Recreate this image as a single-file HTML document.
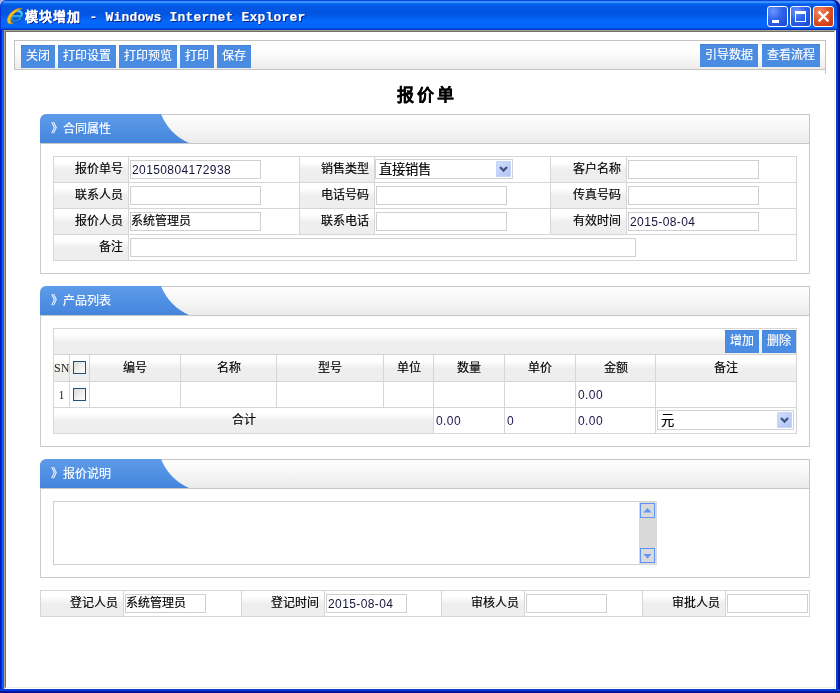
<!DOCTYPE html>
<html lang="zh-CN">
<head>
<meta charset="utf-8">
<title>模块增加</title>
<style>
*{box-sizing:border-box;margin:0;padding:0}
html,body{width:840px;height:693px;overflow:hidden}
body{position:relative;background:#fff;font-family:"Liberation Sans",sans-serif;font-size:12px;color:#000;-webkit-text-stroke:.150px}
.abs{position:absolute}
/* window frame */
#corner{left:0;top:0;width:840px;height:12px;background:#a6b6ed}
#tbar{left:0;top:0;width:840px;height:30px;border-radius:7px 7px 0 0;
 background:linear-gradient(180deg,#0848dc 0,#0848dc .600px,#3b90ff 1.400px,#3a8fff 2.600px,#0b6cf6 3.500px,#0560ec 4.500px,#0357e3 6px,#0355e1 14px,#0460f0 18px,#0468fc 21px,#0467fc 27px,#0550e2 28.500px,#0234c6 29.500px,#0234c6 30px)}
#tbar:before{content:"";position:absolute;left:0;top:0;width:100%;height:100%;border-radius:7px 7px 0 0;
 box-shadow:inset 1px 0 #0831d9,inset -1px 0 #00138c,inset -3px 0 #001ea0}
#bl{left:0;top:30px;width:4px;height:663px;background:linear-gradient(90deg,#0019cc 0,#0019cc 1.200px,#1667ee 2.600px,#0a54e0 4px)}
#br{left:836px;top:30px;width:4px;height:663px;background:linear-gradient(90deg,#0844dc 0,#0831d9 2px,#001ea0 2px,#00138c 4px)}
#bb{left:0;top:689px;width:840px;height:4px;background:linear-gradient(180deg,#0844dc 0,#0831d9 2px,#001ea0 2px,#00138c 4px)}
#edge{left:4px;top:30px;width:832px;height:659px;border-style:solid;border-width:1px;border-color:#aca899 #fff #fff #aca899}
#edge2{left:5px;top:31px;width:830px;height:657px;border-style:solid;border-width:1px;border-color:#716f64 #f1efe2 #f1efe2 #716f64}
#ttl{left:24.500px;top:9px;height:16px;line-height:16px;color:#fff;font-weight:bold;font-size:13px;white-space:pre;text-shadow:1px 1px #0a1f8f}
#ttl .cn{letter-spacing:1px}
#ttl .en{font-family:"Liberation Mono",monospace;letter-spacing:.2px;margin-left:1px}
.cap{top:6px;width:21px;height:21px;border:1px solid #fff;border-radius:3px}
.capb{background:radial-gradient(circle at 28% 22%,#6a96fa 0,#2e63ec 45%,#1a45d0 100%)}
.capr{background:radial-gradient(circle at 30% 25%,#ee8c6c 0,#de4f22 50%,#c2330f 100%)}
/* toolbar */
#tool{left:14px;top:40px;width:812px;height:30px;border:1px solid #c4c4c4;background:linear-gradient(180deg,#fff 0,#fdfdfd 40%,#ececec 100%)}
#toolr{left:825px;top:40px;width:1px;height:34px;background:#c4c4c4}
.btn{height:23px;line-height:23px;background:#4a8ce2;color:#fff;text-align:center;font-size:12px;box-shadow:inset 0 1px #4583d6}
/* sections */
.sec{left:40px;width:770px;border:1px solid #cbcbcb;background:#fff;border-top-left-radius:7px}
.hd{left:40px;width:770px;height:30px;border:1px solid #c6c6c6;border-top-left-radius:7px;background:linear-gradient(180deg,#fefefe 0,#f6f6f6 50%,#ebebeb 100%)}
.tab{left:40px;width:156px;height:30px}
.tabt{color:#fff;font-size:12px;left:51px;height:14px;line-height:14px;white-space:pre}
/* form grid */
.line{background:#d6d6d6}
.lab{background:linear-gradient(180deg,#fff 0,#fff 22%,#eee 52%,#eee 100%);text-align:right;padding-right:5px;height:25px;line-height:25px;white-space:nowrap}
.inp{border:1px solid #cfcfcf;background:#fff;height:19px;line-height:18px;padding-left:1px;font-size:12px;color:#15153a;white-space:nowrap;overflow:hidden}
.inp.cn{color:#000;padding-left:0;line-height:16px}
.num{letter-spacing:.4px;-webkit-text-stroke:0}
.sel{border:1px solid #d2d2d2;background:#fff;height:20px;line-height:20px;padding-left:3px;font-size:13.300px;white-space:nowrap}
.dd{width:15px;height:16px;border-radius:2px;background:linear-gradient(135deg,#d6e1fd 0,#c0d1fa 50%,#aec3f6 100%);box-shadow:inset 0 0 0 1px #c5d3fb}
.gh{background:linear-gradient(180deg,#fff 0,#fff 22%,#eee 52%,#eee 100%)}
.th{height:26px;line-height:26px;text-align:center;white-space:nowrap}
.ser{font-family:"Liberation Serif",serif;font-size:12px;color:#2a1d0e;-webkit-text-stroke:0}
.chk{width:13px;height:13px;border:1px solid #1c5180;background:linear-gradient(135deg,#dcdcd6 0,#f1f1ee 60%,#fff 100%)}
.val{color:#1a1750;font-size:12px;height:14px;line-height:14px;white-space:nowrap}
.sbtn{width:15px;height:15px;border:1px solid #5f93f6;background:#d9d9d9}
</style>
</head>
<body>
<div id="root" class="abs" style="left:0;top:0;width:840px;height:693px;will-change:transform">
<!-- XP window chrome -->
<div class="abs" id="corner"></div>
<div class="abs" id="tbar"></div>
<div class="abs" id="bl"></div>
<div class="abs" id="br"></div>
<div class="abs" id="bb"></div>
<div class="abs" id="edge"></div>
<div class="abs" id="edge2"></div>
<svg class="abs" style="left:7px;top:8px;overflow:visible" width="16" height="16" viewBox="0 0 16 16">
 <defs><linearGradient id="eg" gradientUnits="userSpaceOnUse" x1="0" y1="2" x2="0" y2="14"><stop offset="0" stop-color="#58ccff"/><stop offset=".55" stop-color="#22a4f2"/><stop offset="1" stop-color="#0d74dc"/></linearGradient></defs>
 <g transform="translate(2.200 0) skewX(-14)">
 <path d="M5 8.300H14.300C14.600 4.900 12.300 2.900 9.500 2.900C6.500 2.900 4.300 5.100 4.300 8C4.300 10.900 6.400 13 9.300 13C11.500 13 13.300 11.900 14.100 10.100" fill="none" stroke="#0b3a9e" stroke-width="3.700"/>
 <path d="M5 8.300H14.300C14.600 4.900 12.300 2.900 9.500 2.900C6.500 2.900 4.300 5.100 4.300 8C4.300 10.900 6.400 13 9.300 13C11.500 13 13.300 11.900 14.100 10.100" fill="none" stroke="url(#eg)" stroke-width="2.500"/>
 </g>
 <path d="M15.200 .5C12 -.6 6.500 1.500 3 5.800C0 9.600 -.6 13.600 1.400 15.200C2.600 16.200 4.800 15.900 6.600 14.800C5 15 4.200 14.500 3.800 13.600C3 11.800 4 8.800 6.600 6C9.200 3.200 12.800 1.100 15.200 .5Z" fill="#f8c01f" stroke="#c2820c" stroke-width=".5"/>
</svg>
<div class="abs" id="ttl"><span class="cn">模块增加</span><span class="en"> - Windows Internet Explorer</span></div>
<div class="abs cap capb" style="left:767px"><div class="abs" style="left:4px;top:13px;width:7px;height:3px;background:#fff"></div></div>
<div class="abs cap capb" style="left:790px"><div class="abs" style="left:4px;top:4px;width:11px;height:11px;border:1px solid #fff;border-top-width:3px"></div></div>
<div class="abs cap capr" style="left:813px"><svg class="abs" style="left:0;top:0" width="19" height="19" viewBox="0 0 19 19"><path d="M5.500 5.500l8 8M13.500 5.500l-8 8" stroke="#fff" stroke-width="2.400" stroke-linecap="square"/></svg></div>

<!-- toolbar -->
<div class="abs" id="tool"></div>
<div class="abs" id="toolr"></div>
<div class="abs btn" style="left:21px;top:45px;width:34px">关闭</div>
<div class="abs btn" style="left:58px;top:45px;width:58px">打印设置</div>
<div class="abs btn" style="left:119px;top:45px;width:58px">打印预览</div>
<div class="abs btn" style="left:180px;top:45px;width:34px">打印</div>
<div class="abs btn" style="left:217px;top:45px;width:34px">保存</div>
<div class="abs btn" style="left:700px;top:44px;width:58px">引导数据</div>
<div class="abs btn" style="left:762px;top:44px;width:58px">查看流程</div>

<!-- title -->
<div class="abs" style="left:40px;top:85px;width:770px;height:22px;line-height:22px;text-align:center;font-size:17px;font-weight:bold;letter-spacing:3px;padding-left:3px">报价单</div>

<!-- section 1 -->
<div class="abs sec" style="top:114px;height:160px"></div>
<div class="abs hd" style="top:114px"></div>
<svg class="abs tab" style="top:114px" viewBox="0 0 156 30"><defs><linearGradient id="tg" x1="0" y1="0" x2="0" y2="1"><stop offset="0" stop-color="#5e9ce9"/><stop offset="1" stop-color="#4485dc"/></linearGradient></defs><path d="M0 29V7Q0 0 7 0H121Q129 20 149 29Z" fill="url(#tg)"/></svg>
<div class="abs tabt" style="top:122px">》合同属性</div>

<!-- section 2 -->
<div class="abs sec" style="top:286px;height:161px"></div>
<div class="abs hd" style="top:286px"></div>
<svg class="abs tab" style="top:286px" viewBox="0 0 156 30"><path d="M0 29V7Q0 0 7 0H121Q129 20 149 29Z" fill="url(#tg)"/></svg>
<div class="abs tabt" style="top:294px">》产品列表</div>

<!-- section 3 -->
<div class="abs sec" style="top:459px;height:119px"></div>
<div class="abs hd" style="top:459px"></div>
<svg class="abs tab" style="top:459px" viewBox="0 0 156 30"><path d="M0 29V7Q0 0 7 0H121Q129 20 149 29Z" fill="url(#tg)"/></svg>
<div class="abs tabt" style="top:467px">》报价说明</div>

<!-- form1 -->
<div class="abs line" style="left:53px;top:156px;width:744px;height:1px"></div>
<div class="abs line" style="left:53px;top:182px;width:744px;height:1px"></div>
<div class="abs line" style="left:53px;top:208px;width:744px;height:1px"></div>
<div class="abs line" style="left:53px;top:234px;width:744px;height:1px"></div>
<div class="abs line" style="left:53px;top:260px;width:744px;height:1px"></div>
<div class="abs line" style="left:53px;top:156px;width:1px;height:105px"></div>
<div class="abs line" style="left:128px;top:156px;width:1px;height:105px"></div>
<div class="abs line" style="left:796px;top:156px;width:1px;height:105px"></div>
<div class="abs line" style="left:299px;top:156px;width:1px;height:79px"></div>
<div class="abs line" style="left:374px;top:156px;width:1px;height:79px"></div>
<div class="abs line" style="left:550px;top:156px;width:1px;height:79px"></div>
<div class="abs line" style="left:626px;top:156px;width:1px;height:79px"></div>
<div class="abs lab" style="left:54px;top:157px;width:74px">报价单号</div>
<div class="abs lab" style="left:300px;top:157px;width:74px">销售类型</div>
<div class="abs lab" style="left:551px;top:157px;width:75px">客户名称</div>
<div class="abs lab" style="left:54px;top:183px;width:74px">联系人员</div>
<div class="abs lab" style="left:300px;top:183px;width:74px">电话号码</div>
<div class="abs lab" style="left:551px;top:183px;width:75px">传真号码</div>
<div class="abs lab" style="left:54px;top:209px;width:74px">报价人员</div>
<div class="abs lab" style="left:300px;top:209px;width:74px">联系电话</div>
<div class="abs lab" style="left:551px;top:209px;width:75px">有效时间</div>
<div class="abs lab" style="left:54px;top:235px;width:74px">备注</div>
<div class="abs inp num" style="left:130px;top:160px;width:131px">20150804172938</div>
<div class="abs inp " style="left:130px;top:186px;width:131px"></div>
<div class="abs inp cn" style="left:130px;top:212px;width:131px">系统管理员</div>
<div class="abs inp " style="left:130px;top:238px;width:506px"></div>
<div class="abs sel" style="left:375px;top:159px;width:138px">直接销售</div><div class="abs dd" style="left:496px;top:161px"><svg class="abs" style="left:0;top:0" width="15" height="16" viewBox="0 0 15 16"><path d="M4 6l3.500 3.500l3.500-3.500" fill="none" stroke="#42557e" stroke-width="2.300"/></svg></div>
<div class="abs inp " style="left:376px;top:186px;width:131px"></div>
<div class="abs inp " style="left:376px;top:212px;width:131px"></div>
<div class="abs inp " style="left:628px;top:160px;width:131px"></div>
<div class="abs inp " style="left:628px;top:186px;width:131px"></div>
<div class="abs inp num" style="left:628px;top:212px;width:131px">2015-08-04</div>
<!-- table2 -->
<div class="abs gh" style="left:54px;top:329px;width:742px;height:25px"></div>
<div class="abs gh" style="left:54px;top:355px;width:742px;height:26px"></div>
<div class="abs gh" style="left:54px;top:408px;width:379px;height:25px"></div>
<div class="abs line" style="left:53px;top:328px;width:744px;height:1px"></div>
<div class="abs line" style="left:53px;top:354px;width:744px;height:1px"></div>
<div class="abs line" style="left:53px;top:381px;width:744px;height:1px"></div>
<div class="abs line" style="left:53px;top:407px;width:744px;height:1px"></div>
<div class="abs line" style="left:53px;top:433px;width:744px;height:1px"></div>
<div class="abs line" style="left:53px;top:328px;width:1px;height:106px"></div>
<div class="abs line" style="left:796px;top:328px;width:1px;height:106px"></div>
<div class="abs line" style="left:69px;top:354px;width:1px;height:54px"></div>
<div class="abs line" style="left:89px;top:354px;width:1px;height:54px"></div>
<div class="abs line" style="left:180px;top:354px;width:1px;height:54px"></div>
<div class="abs line" style="left:276px;top:354px;width:1px;height:54px"></div>
<div class="abs line" style="left:383px;top:354px;width:1px;height:54px"></div>
<div class="abs line" style="left:433px;top:354px;width:1px;height:80px"></div>
<div class="abs line" style="left:504px;top:354px;width:1px;height:80px"></div>
<div class="abs line" style="left:575px;top:354px;width:1px;height:80px"></div>
<div class="abs line" style="left:655px;top:354px;width:1px;height:80px"></div>
<div class="abs btn" style="left:725px;top:330px;width:34px">增加</div>
<div class="abs btn" style="left:762px;top:330px;width:34px">删除</div>
<div class="abs th" style="left:90px;top:355px;width:90px">编号</div>
<div class="abs th" style="left:181px;top:355px;width:95px">名称</div>
<div class="abs th" style="left:277px;top:355px;width:106px">型号</div>
<div class="abs th" style="left:384px;top:355px;width:49px">单位</div>
<div class="abs th" style="left:434px;top:355px;width:70px">数量</div>
<div class="abs th" style="left:505px;top:355px;width:70px">单价</div>
<div class="abs th" style="left:576px;top:355px;width:79px">金额</div>
<div class="abs th" style="left:656px;top:355px;width:140px">备注</div>
<div class="abs th ser" style="left:54px;top:355px;width:15px">SN</div>
<div class="abs th ser" style="left:54px;top:382px;width:15px">1</div>
<div class="abs chk" style="left:73px;top:361px"></div>
<div class="abs chk" style="left:73px;top:388px"></div>
<div class="abs th" style="left:54px;top:407px;width:379px">合计</div>
<div class="abs val num" style="left:578px;top:388px">0.00</div>
<div class="abs val num" style="left:436px;top:414px">0.00</div>
<div class="abs val num" style="left:507px;top:414px">0</div>
<div class="abs val num" style="left:578px;top:414px">0.00</div>
<div class="abs sel" style="left:657px;top:410px;width:137px">元</div><div class="abs dd" style="left:777px;top:412px"><svg class="abs" style="left:0;top:0" width="15" height="16" viewBox="0 0 15 16"><path d="M4 6l3.500 3.500l3.500-3.500" fill="none" stroke="#42557e" stroke-width="2.300"/></svg></div>
<!-- sec3 -->
<div class="abs" style="left:53px;top:501px;width:604px;height:64px;border:1px solid #d0d0d0;background:#fff"></div>
<div class="abs" style="left:639px;top:501px;width:18px;height:64px;background:#d9d9d9"></div>
<div class="abs sbtn" style="left:640px;top:503px"><svg class="abs" style="left:0;top:0" width="13" height="13" viewBox="0 0 13 13"><path d="M2.500 8.500L6.500 4L10.500 8.500Z" fill="#5f93f6"/></svg></div>
<div class="abs sbtn" style="left:640px;top:548px"><svg class="abs" style="left:0;top:0" width="13" height="13" viewBox="0 0 13 13"><path d="M2.500 5L6.500 9.500L10.500 5Z" fill="#5f93f6"/></svg></div>
<!-- footer -->
<div class="abs line" style="left:40px;top:590px;width:770px;height:1px"></div>
<div class="abs line" style="left:40px;top:616px;width:770px;height:1px"></div>
<div class="abs line" style="left:40px;top:590px;width:1px;height:27px"></div>
<div class="abs line" style="left:123px;top:590px;width:1px;height:27px"></div>
<div class="abs line" style="left:241px;top:590px;width:1px;height:27px"></div>
<div class="abs line" style="left:324px;top:590px;width:1px;height:27px"></div>
<div class="abs line" style="left:441px;top:590px;width:1px;height:27px"></div>
<div class="abs line" style="left:524px;top:590px;width:1px;height:27px"></div>
<div class="abs line" style="left:642px;top:590px;width:1px;height:27px"></div>
<div class="abs line" style="left:725px;top:590px;width:1px;height:27px"></div>
<div class="abs line" style="left:809px;top:590px;width:1px;height:27px"></div>
<div class="abs lab" style="left:41px;top:591px;width:82px">登记人员</div>
<div class="abs lab" style="left:242px;top:591px;width:82px">登记时间</div>
<div class="abs lab" style="left:442px;top:591px;width:82px">审核人员</div>
<div class="abs lab" style="left:643px;top:591px;width:82px">审批人员</div>
<div class="abs inp cn" style="left:125px;top:594px;width:81px">系统管理员</div>
<div class="abs inp num" style="left:326px;top:594px;width:81px">2015-08-04</div>
<div class="abs inp " style="left:526px;top:594px;width:81px"></div>
<div class="abs inp " style="left:727px;top:594px;width:81px"></div>
</div>
</body>
</html>
